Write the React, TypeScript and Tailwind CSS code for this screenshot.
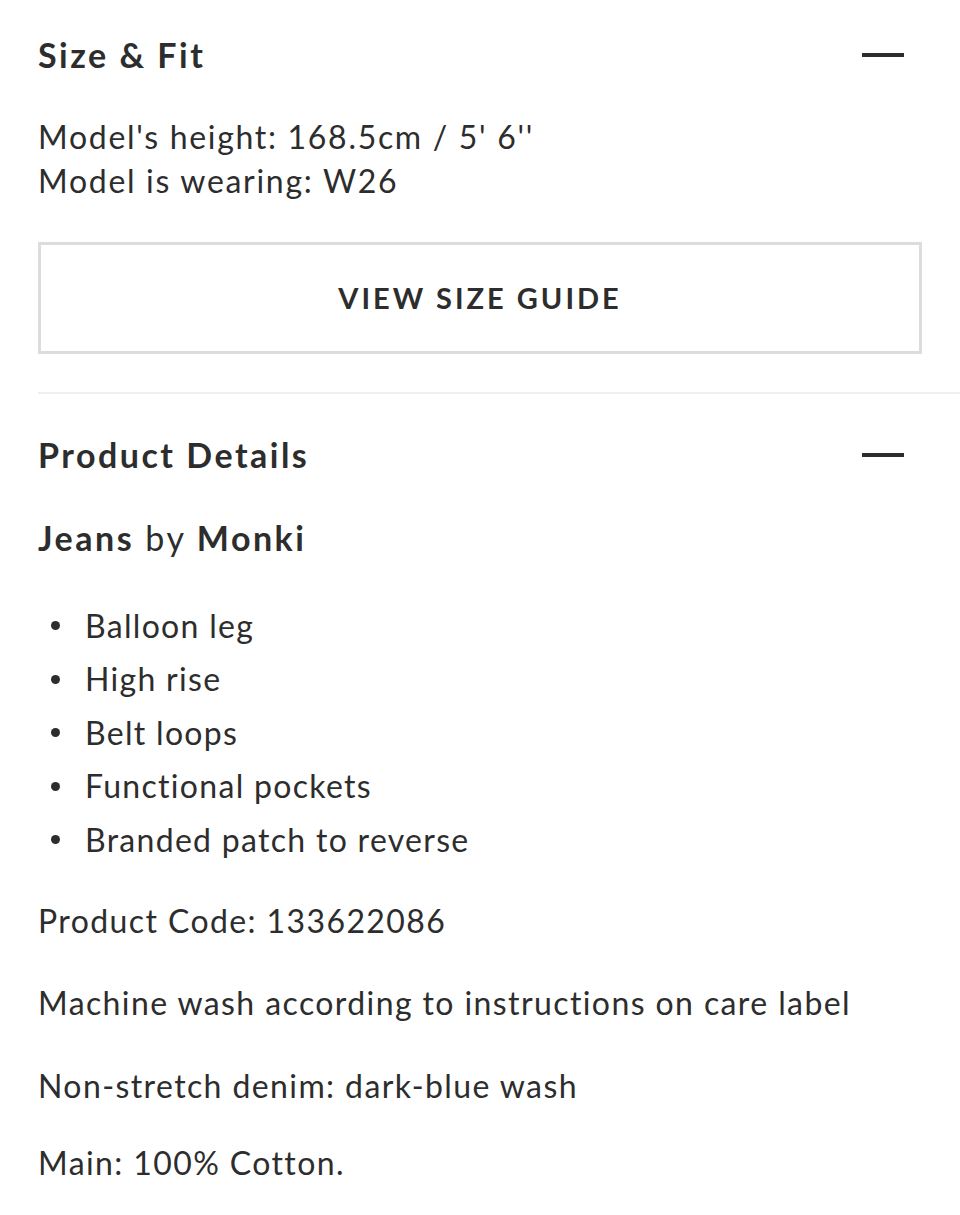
const bullets: string[] = [
  'Balloon leg',
  'High rise',
  'Belt loops',
  'Functional pockets',
  'Branded patch to reverse',
];

const Minus = () => <span className="block w-[42px] h-[4px] bg-[#2d2d2d] mr-[18px]" />;

const Heading = ({ title }: { title: string }) => (
  <div className="flex items-center justify-between h-[40px]">
    <h2 className="text-[34px] leading-[40px] font-bold tracking-[2.5px]">{title}</h2>
    <Minus />
  </div>
);

export default function App() {
  return (
    <div
      className="bg-white text-[#2d2d2d] px-[38px] min-h-[1215px]"
      style={{ fontFamily: 'Lato, "Noto Sans", sans-serif' }}
    >
      <section className="pt-[35px]">
        <Heading title="Size & Fit" />
        <div className="mt-[40px] text-[32px] leading-[44px] tracking-[1.7px]">
          <p>Model's height: 168.5cm / 5' 6''</p>
          <p>Model is wearing: W26</p>
        </div>
        <button className="mt-[39px] w-full h-[112px] border-[3px] border-[#dcdcdc] bg-white text-[29px] font-bold tracking-[3px]">
          VIEW SIZE GUIDE
        </button>
      </section>
      <div className="mt-[38px] mr-[-38px] h-[2px] bg-[#efefef]" />
      <section className="mt-[41px]">
        <Heading title="Product Details" />
        <p className="mt-[41px] text-[34px] leading-[44px] tracking-[2.5px]">
          <span className="font-bold">Jeans</span> by <span className="font-bold">Monki</span>
        </p>
        <ul className="mt-[39px] text-[32px] tracking-[1.3px]">
          {bullets.map((item) => (
            <li key={item} className="flex items-center h-[53.5px]">
              <span className="w-[9px] h-[9px] rounded-full bg-[#2d2d2d] ml-[13px] mr-[25px]" />
              {item}
            </li>
          ))}
        </ul>
        <div className="text-[32px] leading-[44px] tracking-[1.4px]">
          <p className="mt-[32px]">Product Code: 133622086</p>
          <p className="mt-[38px]">Machine wash according to instructions on care label</p>
          <p className="mt-[39px]">Non-stretch denim: dark-blue wash</p>
          <p className="mt-[33px]">Main: 100% Cotton.</p>
        </div>
      </section>
    </div>
  );
}
